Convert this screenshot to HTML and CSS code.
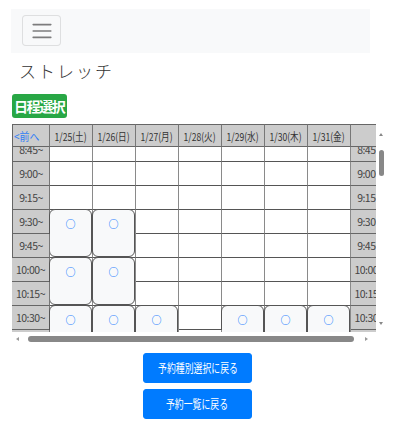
FILE: index.html
```html
<!DOCTYPE html>
<html lang="ja">
<head>
<meta charset="utf-8">
<title>ストレッチ</title>
<link rel="stylesheet" href="styles.css">
</head>
<body>
<div class="page">
  <nav class="navbar">
    <button class="toggler" type="button" aria-label="menu">
      <svg class="toggler-icon" viewBox="0 0 30 30" width="24" height="24"><path d="M4 7h22M4 15h22M4 23h22" stroke="rgba(0,0,0,0.5)" stroke-width="2" stroke-linecap="round" fill="none"/></svg>
    </button>
  </nav>
  <h1 class="title">ストレッチ</h1>
  <div class="badge-row"><span class="badge">日程選択</span></div>

  <div class="sched">
    <div class="sched-main">
      <div class="viewport">
        <div class="grid head">
          <div class="hcell prev"><span class="sq">&lt;前へ</span></div>
          <div class="hcell"><span class="sq">1/25(土)</span></div>
          <div class="hcell"><span class="sq">1/26(日)</span></div>
          <div class="hcell"><span class="sq">1/27(月)</span></div>
          <div class="hcell"><span class="sq">1/28(火)</span></div>
          <div class="hcell"><span class="sq">1/29(水)</span></div>
          <div class="hcell"><span class="sq">1/30(木)</span></div>
          <div class="hcell"><span class="sq">1/31(金)</span></div>
          <div class="hcell"></div>
        </div>
        <div class="body-clip">
          <div class="grid body">
            <!-- 8:45 -->
            <div class="tcell">8:45~</div>
            <div class="cell"></div><div class="cell"></div><div class="cell"></div><div class="cell"></div><div class="cell"></div><div class="cell"></div><div class="cell"></div>
            <div class="tcell">8:45~</div>
            <!-- 9:00 -->
            <div class="tcell">9:00~</div>
            <div class="cell"></div><div class="cell"></div><div class="cell"></div><div class="cell"></div><div class="cell"></div><div class="cell"></div><div class="cell"></div>
            <div class="tcell">9:00~</div>
            <!-- 9:15 -->
            <div class="tcell">9:15~</div>
            <div class="cell"></div><div class="cell"></div><div class="cell"></div><div class="cell"></div><div class="cell"></div><div class="cell"></div><div class="cell"></div>
            <div class="tcell">9:15~</div>
            <!-- 9:30 -->
            <div class="tcell">9:30~</div>
            <div class="cell slot"><button class="slot-btn" type="button">○</button></div>
            <div class="cell slot"><button class="slot-btn" type="button">○</button></div>
            <div class="cell"></div><div class="cell"></div><div class="cell"></div><div class="cell"></div><div class="cell"></div>
            <div class="tcell">9:30~</div>
            <!-- 9:45 -->
            <div class="tcell">9:45~</div>
            <div class="cell"></div><div class="cell"></div><div class="cell"></div><div class="cell"></div><div class="cell"></div>
            <div class="tcell">9:45~</div>
            <!-- 10:00 -->
            <div class="tcell">10:00~</div>
            <div class="cell slot"><button class="slot-btn" type="button">○</button></div>
            <div class="cell slot"><button class="slot-btn" type="button">○</button></div>
            <div class="cell"></div><div class="cell"></div><div class="cell"></div><div class="cell"></div><div class="cell"></div>
            <div class="tcell">10:00~</div>
            <!-- 10:15 -->
            <div class="tcell">10:15~</div>
            <div class="cell"></div><div class="cell"></div><div class="cell"></div><div class="cell"></div><div class="cell"></div>
            <div class="tcell">10:15~</div>
            <!-- 10:30 -->
            <div class="tcell">10:30~</div>
            <div class="cell slot"><button class="slot-btn" type="button">○</button></div>
            <div class="cell slot"><button class="slot-btn" type="button">○</button></div>
            <div class="cell slot"><button class="slot-btn" type="button">○</button></div>
            <div class="cell"></div>
            <div class="cell slot"><button class="slot-btn" type="button">○</button></div>
            <div class="cell slot"><button class="slot-btn" type="button">○</button></div>
            <div class="cell slot"><button class="slot-btn" type="button">○</button></div>
            <div class="tcell">10:30~</div>
            <!-- 10:45 -->
            <div class="tcell">10:45~</div>
            <div class="cell"></div>
            <div class="tcell">10:45~</div>
          </div>
        </div>
      </div>
      <div class="vbar">
        <span class="arrow up"></span>
        <span class="vthumb"></span>
        <span class="vspace"></span>
        <span class="arrow down"></span>
      </div>
    </div>
    <div class="hbar">
      <span class="arrow left"></span>
      <span class="hthumb"></span>
      <span class="arrow right"></span>
    </div>
  </div>

  <div class="actions">
    <button class="btn" type="button"><span class="sq">予約種別選択に戻る</span></button>
    <button class="btn" type="button"><span class="sq">予約一覧に戻る</span></button>
  </div>
</div>
</body>
</html>
```

FILE: styles.css
```css
* { box-sizing: border-box; }

html, body {
  margin: 0;
  padding: 0;
  background: #fff;
}

body {
  font-family: "Noto Sans CJK JP", "Noto Sans", sans-serif;
  color: #333;
}

.page {
  padding-top: 9px;
  width: 410px;
}

.navbar {
  margin-left: 11px;
  width: 359px;
  height: 44px;
  background: #f8f9fa;
  padding: 6px 0 0 11px;
}

.toggler {
  width: 39px;
  height: 31px;
  padding: 0;
  margin: 0;
  border: 1px solid rgba(0, 0, 0, 0.1);
  border-radius: 4px;
  background: #f8f9fa;
  display: flex;
  align-items: center;
  justify-content: center;
}

.toggler-icon { display: block; }

.title {
  margin: 6px 0 0 19px;
  font-size: 17px;
  line-height: 24px;
  font-weight: 300;
  letter-spacing: 2px;
  color: #333;
}

.badge-row {
  margin: 10px 0 0 12px;
  height: 24px;
}

.badge {
  display: inline-block;
  height: 24px;
  padding: 4px 3px 4px 2px;
  font-size: 14px;
  line-height: 16px;
  font-weight: 700;
  letter-spacing: -1.4px;
  color: #fff;
  background: #28a745;
  border-radius: 3px;
}

/* schedule */
.sched {
  margin: 7px 0 0 12px;
  width: 374px;
}

.sched-main {
  display: flex;
}

.viewport {
  width: 364px;
  overflow: hidden;
}

.grid {
  display: grid;
  grid-template-columns: 38px repeat(7, 43px) 37px;
  width: 376px;
}

.head {
  height: 23px;
}

.hcell {
  height: 23px;
  background: #cccccc;
  border-top: 1px solid #666;
  border-right: 1px solid #777;
  border-bottom: 1px solid #666;
  display: flex;
  align-items: center;
  justify-content: center;
  font-size: 11px;
  color: #333;
  white-space: nowrap;
}

.hcell:first-child { border-left: 1px solid #666; }

.hcell.prev {
  color: #2f7cf6;
  justify-content: flex-start;
  padding-left: 1px;
  font-size: 11.5px;
}

.sq {
  display: inline-block;
  transform: scaleX(0.78);
  white-space: nowrap;
}

.hcell.prev .sq {
  transform-origin: left center;
  transform: scaleX(0.86);
}

.body-clip {
  height: 185px;
  overflow: hidden;
}

.body {
  margin-top: -9px;
  grid-auto-rows: 24px;
}

.tcell {
  background: #cccccc;
  border-right: 1px solid #777;
  border-bottom: 1px solid #666;
  display: flex;
  align-items: center;
  justify-content: center;
  font-size: 10.5px;
  letter-spacing: -0.5px;
  color: #444;
  white-space: nowrap;
}

.body > .tcell:nth-child(9n + 1) { border-left: 1px solid #666; }

.cell {
  background: #fff;
  border-right: 1px solid #8a8a8a;
  border-bottom: 1px solid #555;
}

.cell.slot {
  grid-row: span 2;
}

.slot-btn {
  margin: -1px 0 0 -1px;
  width: calc(100% + 1px);
  height: calc(100% + 1px);
  padding: 6px 0 0;
  border: 1px solid #555;
  border-radius: 6px;
  background: #f8f9fa;
  color: #1a7cff;
  font-family: "Noto Sans CJK JP", sans-serif;
  font-size: 10px;
  font-weight: 700;
  line-height: 16px;
  display: flex;
  justify-content: center;
  align-items: flex-start;
}

/* fake scrollbars */
.vbar {
  width: 10px;
  height: 208px;
  display: flex;
  flex-direction: column;
  align-items: center;
  padding: 9px 0 7px;
  background: #fff;
}

.vthumb {
  display: block;
  margin-top: 14px;
  width: 5px;
  height: 26px;
  border-radius: 3px;
  background: #888;
}

.vspace { flex: 1; }

.arrow {
  display: block;
  width: 0;
  height: 0;
}

.arrow.up {
  border-left: 2.5px solid transparent;
  border-right: 2.5px solid transparent;
  border-bottom: 3px solid #888;
}

.arrow.down {
  border-left: 2.5px solid transparent;
  border-right: 2.5px solid transparent;
  border-top: 3px solid #888;
}

.hbar {
  width: 364px;
  height: 14px;
  display: flex;
  align-items: center;
  padding: 0 4px 0 4px;
  background: #fff;
}

.arrow.left {
  border-top: 2.5px solid transparent;
  border-bottom: 2.5px solid transparent;
  border-right: 3px solid #999;
}

.hthumb {
  display: block;
  margin-left: 9px;
  width: 326px;
  height: 6px;
  border-radius: 3px;
  background: #888;
}

.arrow.right {
  margin-left: auto;
  margin-right: 4px;
  border-top: 2.5px solid transparent;
  border-bottom: 2.5px solid transparent;
  border-left: 3px solid #999;
}

/* actions */
.actions {
  margin: 7px 0 0 12px;
  width: 371px;
  display: flex;
  flex-direction: column;
  align-items: center;
  gap: 6px;
}

.btn {
  width: 109px;
  height: 30px;
  padding: 0;
  border: 1px solid #007bff;
  border-radius: 3px;
  background: #007bff;
  color: #fff;
  font-family: "Noto Sans CJK JP", sans-serif;
  font-size: 12px;
  line-height: 16px;
  display: flex;
  align-items: center;
  justify-content: center;
}

.btn .sq { transform: scaleX(0.74); }
```
